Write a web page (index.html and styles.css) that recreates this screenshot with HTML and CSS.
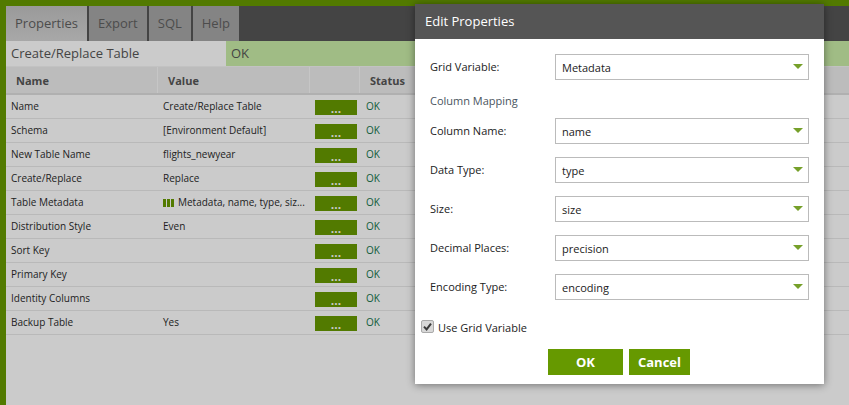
FILE: index.html
```html
<!DOCTYPE html>
<html lang="en">
<head>
  <meta charset="UTF-8">
  <title>Edit Properties</title>
  <link rel="stylesheet" href="styles.css">
</head>
<body>

  <div class="panel">
    <div class="tabs">
      <div class="tab tab-active">Properties</div>
      <div class="tab">Export</div>
      <div class="tab">SQL</div>
      <div class="tab">Help</div>
    </div>

    <div class="title-row">
      <div class="title-name">Create/Replace Table</div>
      <div class="title-status">OK</div>
    </div>

    <div class="row head">
      <div class="cell c-name">Name</div>
      <div class="cell c-value">Value</div>
      <div class="cell c-btn"></div>
      <div class="cell c-status">Status</div>
    </div>

    <div class="row"><div class="cell c-name">Name</div><div class="cell c-value">Create/Replace Table</div><div class="cell c-btn"><span class="dots">...</span></div><div class="cell c-status">OK</div></div>
    <div class="row"><div class="cell c-name">Schema</div><div class="cell c-value">[Environment Default]</div><div class="cell c-btn"><span class="dots">...</span></div><div class="cell c-status">OK</div></div>
    <div class="row"><div class="cell c-name">New Table Name</div><div class="cell c-value">flights_newyear</div><div class="cell c-btn"><span class="dots">...</span></div><div class="cell c-status">OK</div></div>
    <div class="row"><div class="cell c-name">Create/Replace</div><div class="cell c-value">Replace</div><div class="cell c-btn"><span class="dots">...</span></div><div class="cell c-status">OK</div></div>
    <div class="row"><div class="cell c-name">Table Metadata</div><div class="cell c-value"><span class="grid-icon"><i></i><i></i><i></i></span>Metadata, name, type, siz...</div><div class="cell c-btn"><span class="dots">...</span></div><div class="cell c-status">OK</div></div>
    <div class="row"><div class="cell c-name">Distribution Style</div><div class="cell c-value">Even</div><div class="cell c-btn"><span class="dots">...</span></div><div class="cell c-status">OK</div></div>
    <div class="row"><div class="cell c-name">Sort Key</div><div class="cell c-value"></div><div class="cell c-btn"><span class="dots">...</span></div><div class="cell c-status">OK</div></div>
    <div class="row"><div class="cell c-name">Primary Key</div><div class="cell c-value"></div><div class="cell c-btn"><span class="dots">...</span></div><div class="cell c-status">OK</div></div>
    <div class="row"><div class="cell c-name">Identity Columns</div><div class="cell c-value"></div><div class="cell c-btn"><span class="dots">...</span></div><div class="cell c-status">OK</div></div>
    <div class="row"><div class="cell c-name">Backup Table</div><div class="cell c-value">Yes</div><div class="cell c-btn"><span class="dots">...</span></div><div class="cell c-status">OK</div></div>
  </div>

  <div class="dialog">
    <div class="dialog-title">Edit Properties</div>
    <div class="dialog-body">
      <div class="field">
        <label>Grid Variable:</label>
        <div class="select">Metadata</div>
      </div>
      <div class="mapping">Column Mapping</div>
      <div class="fields">
        <div class="field"><label>Column Name:</label><div class="select">name</div></div>
        <div class="field"><label>Data Type:</label><div class="select">type</div></div>
        <div class="field"><label>Size:</label><div class="select">size</div></div>
        <div class="field"><label>Decimal Places:</label><div class="select">precision</div></div>
        <div class="field"><label>Encoding Type:</label><div class="select">encoding</div></div>
      </div>
      <div class="use-grid">
        <span class="check">
          <svg width="9" height="9" viewBox="0 0 9 9"><path d="M1 4.6 L3.6 7.4 L8 1.6" fill="none" stroke="#3a3a3a" stroke-width="2"/></svg>
        </span>
        Use Grid Variable
      </div>
      <div class="actions">
        <div class="btn btn-ok">OK</div>
        <div class="btn btn-cancel">Cancel</div>
      </div>
    </div>
  </div>

</body>
</html>
```

FILE: styles.css
```css
html, body {
  height: 100%;
}

body {
  margin: 0;
  padding: 6px 0 0 6px;
  box-sizing: border-box;
  background-color: #527a00;
  font-family: "Open Sans", sans-serif;
  font-size: 10px;
  color: #222;
  overflow: hidden;
}

.panel {
  height: 100%;
  background-color: #cbcbcb;
}

.tabs {
  display: flex;
  gap: 2px;
  height: 35px;
  background-color: #444;
  box-sizing: border-box;
}

.tab {
  padding: 0 9px;
  line-height: 35px;
  font-size: 13px;
  color: #4c4c4c;
  background-color: #848484;
}

.tab-active {
  width: 81px;
  box-sizing: border-box;
  background: linear-gradient(#9a9a9a, #a8a8a8);
}

.title-row {
  display: flex;
  height: 25px;
  line-height: 25px;
  font-size: 13px;
  color: #444;
}

.title-name {
  width: 220px;
  padding-left: 5px;
  box-sizing: border-box;
}

.title-status {
  flex: 1;
  padding-left: 5px;
  background-color: #a0bc85;
}

.row {
  display: flex;
  height: 24px;
  line-height: 23px;
  border-bottom: 1px solid #b9b9b9;
  box-sizing: border-box;
}

.head {
  height: 29px;
  line-height: 28px;
  font-size: 11px;
  font-weight: 700;
  color: #444;
  background-color: #bcbcbc;
  border-top: 1px solid #c2c2c2;
  border-bottom: 2px solid #b0b0b0;
}

.cell {
  box-sizing: border-box;
  padding-left: 5px;
  white-space: nowrap;
}

.c-name {
  width: 152px;
}

.c-value {
  width: 152px;
}

.c-btn {
  width: 50px;
  padding-left: 5px;
}

.c-status {
  padding-left: 6px;
  color: #0f5c3a;
}

.head .cell {
  padding-left: 10px;
  border-right: 1px solid #c6c6c6;
}

.head .c-status {
  color: #444;
  flex: 1;
  border-right: none;
}

.dots {
  display: block;
  width: 42px;
  height: 15px;
  margin-top: 5px;
  background-color: #527a00;
  color: #cbcbcb;
  font-size: 12px;
  font-weight: 700;
  line-height: 17px;
  text-align: center;
}

.grid-icon {
  display: inline-flex;
  gap: 1px;
  margin-right: 4px;
  vertical-align: -1px;
}

.grid-icon i {
  display: block;
  width: 3px;
  height: 8px;
  background-color: #527a00;
}

.dialog {
  position: absolute;
  left: 415px;
  top: 4px;
  width: 409px;
  height: 380px;
  background-color: white;
  box-shadow: 0 1px 8px rgba(0,0,0,0.45);
}

.dialog-title {
  height: 35px;
  padding-left: 10px;
  line-height: 34px;
  font-size: 13px;
  color: white;
  background-color: #555;
}

.dialog-body {
  padding: 15px 15px 0 6px;
  font-size: 11px;
  color: #222;
}

.field {
  display: flex;
  align-items: center;
  height: 26px;
  padding-left: 9px;
}

.field label {
  width: 125px;
  margin-top: -2px;
}

.select {
  position: relative;
  flex: 1;
  height: 26px;
  padding-left: 6px;
  line-height: 26px;
  box-sizing: border-box;
  border: 1px solid #bbb;
}

.select::after {
  content: "";
  position: absolute;
  right: 5px;
  top: 9px;
  border-left: 5px solid transparent;
  border-right: 5px solid transparent;
  border-top: 5px solid #76a02a;
}

.mapping {
  margin: 13px 0 10px 9px;
  line-height: 15px;
  color: #4a5560;
}

.fields {
  display: flex;
  flex-direction: column;
  gap: 13px;
}

.use-grid {
  display: flex;
  align-items: center;
  margin-top: 20px;
  height: 16px;
  line-height: 16px;
}

.check {
  display: flex;
  align-items: center;
  justify-content: center;
  width: 13px;
  height: 13px;
  margin-right: 4px;
  margin-top: -3px;
  border-radius: 2px;
  border: 1px solid #aaa;
  box-sizing: border-box;
  background-color: #d8d8d8;
}

.actions {
  display: flex;
  gap: 6px;
  margin-top: 13px;
  margin-left: 127px;
}

.btn {
  height: 26px;
  line-height: 26px;
  text-align: center;
  font-size: 13px;
  font-weight: 700;
  color: white;
  background-color: #669900;
}

.btn-ok {
  width: 75px;
}

.btn-cancel {
  width: 61px;
}
```
